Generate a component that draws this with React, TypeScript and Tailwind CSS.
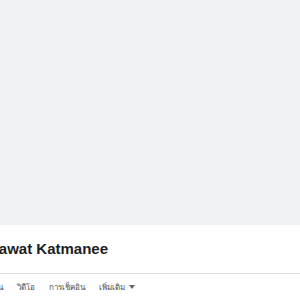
export default function App() {
  const tabs = ["เพื่อน", "วิดีโอ", "การเช็คอิน"];
  return (
    <div className="w-[300px] h-[300px] overflow-hidden bg-white font-['Liberation_Sans',sans-serif]">
      <div className="h-[225px] bg-[#f0f2f5]" />
      <div className="-ml-[37px] h-[49px] border-b border-[#dddfe2] pt-[14px]">
        <h1 className="text-[15px] leading-[20px] font-bold text-[#1c1e21] whitespace-nowrap">
          Thanawat Katmanee
        </h1>
      </div>
      <div className="-ml-[15px] flex items-center gap-[14px] h-[26px] text-[8px] text-[#4b4f56] whitespace-nowrap font-['Tahoma','Noto_Sans',sans-serif]">
        {tabs.map((t) => (
          <span key={t}>{t}</span>
        ))}
        <span className="flex items-center gap-[4px]">
          เพิ่มเติม
          <svg width="6" height="4" viewBox="0 0 6 4">
            <path d="M0 0h6L3 4z" fill="#606770" />
          </svg>
        </span>
      </div>
    </div>
  );
}
